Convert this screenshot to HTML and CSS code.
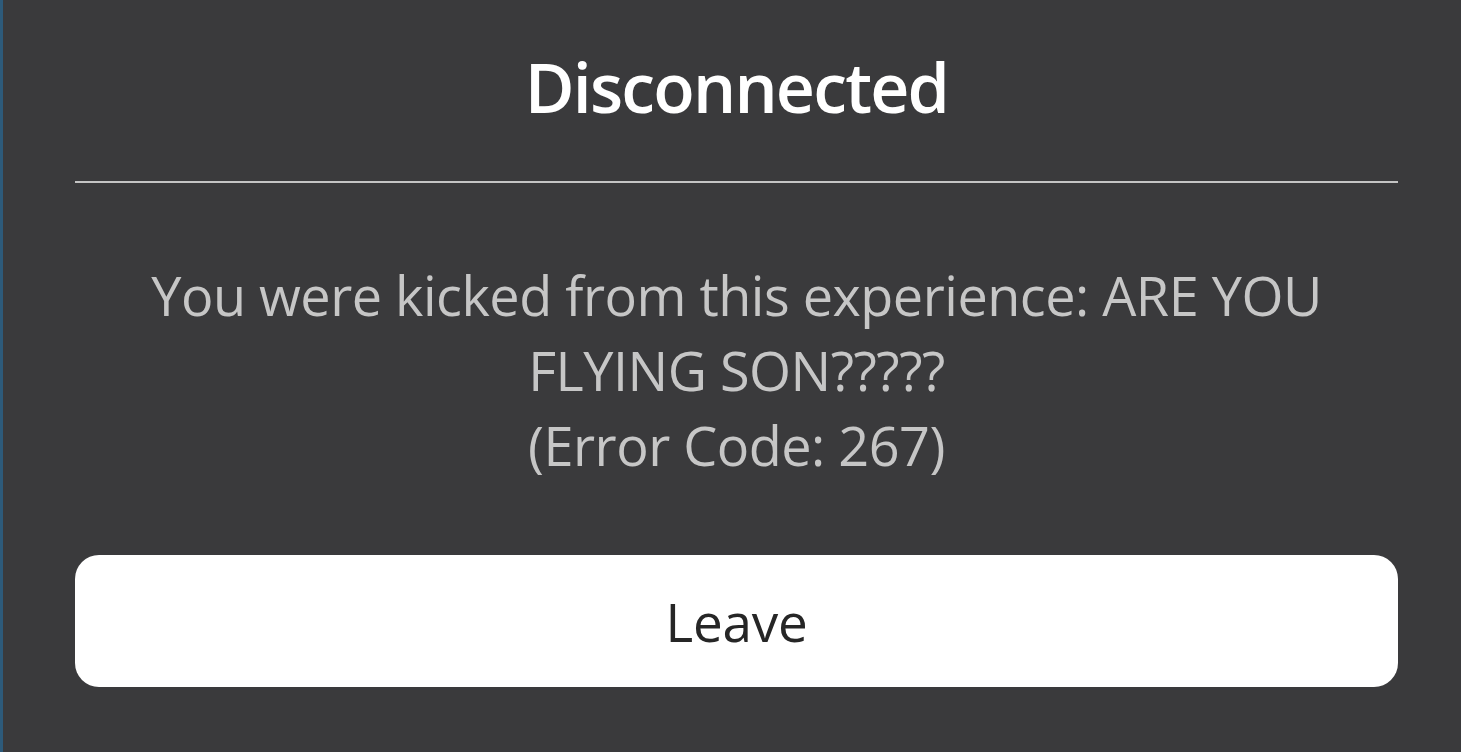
FILE: index.html
```html
<!DOCTYPE html>
<html>
<head>
<meta charset="utf-8">
<link rel="stylesheet" href="styles.css">
</head>
<body>
<div class="dialog">
  <h1 class="title">Disconnected</h1>
  <div class="divider"></div>
  <p class="message">You were kicked from this experience: ARE YOU FLYING SON?????<br>(Error Code: 267)</p>
  <button class="leave">Leave</button>
</div>
</body>
</html>
```
FILE: styles.css
```css
html, body {
  margin: 0;
  padding: 0;
  height: 100%;
}
body {
  background: #3a3a3c;
  font-family: "Open Sans", "Noto Sans", sans-serif;
  border-left: 3px solid #2d5a7a;
  box-sizing: border-box;
  overflow: hidden;
}
.dialog {
  width: 1323px;
  margin-left: 72px;
  display: flex;
  flex-direction: column;
  align-items: stretch;
}
.title {
  margin: 0;
  padding-top: 42px;
  height: 181px;
  box-sizing: border-box;
  text-align: center;
  color: #ffffff;
  font-size: 68px;
  font-weight: 600;
  line-height: 90px;
  letter-spacing: -1.8px;
}
.divider {
  height: 2px;
  background: #c4c4c4;
}
.message {
  margin: 0;
  padding-top: 75px;
  height: 372px;
  box-sizing: border-box;
  text-align: center;
  color: #c6c6c6;
  font-size: 54px;
  line-height: 75px;
  letter-spacing: -0.5px;
  padding-left: 70px;
  padding-right: 70px;
}
.leave {
  height: 132px;
  border: none;
  border-radius: 24px;
  background: #ffffff;
  color: #262626;
  font-family: inherit;
  font-size: 53px;
  padding: 0;
  letter-spacing: -0.2px;
}
```
